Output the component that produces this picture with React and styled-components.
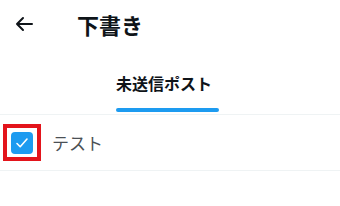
import React from 'react'
import styled, { createGlobalStyle } from 'styled-components'

const GlobalStyle = createGlobalStyle`
  body {
    margin: 0;
    background: #fff;
    font-family: "Noto Sans", "Noto Sans CJK JP", sans-serif;
  }
`

export default function App () {
  return (
    <Page>
      <GlobalStyle />
      <Header>
        <BackButton aria-label='戻る'>
          <svg width='18' height='16' viewBox='0 0 18 16' fill='none'>
            <path d='M17 8H2M8 2L2 8l6 6' stroke='#0f1419' strokeWidth='2' strokeLinecap='round' strokeLinejoin='round' />
          </svg>
        </BackButton>
        <Title>下書き</Title>
      </Header>
      <TabList>
        <Tab>
          <TabLabel>未送信ポスト</TabLabel>
          <TabBar />
        </Tab>
      </TabList>
      <DraftRow>
        <Highlight>
          <CheckBox>
            <svg width='14' height='12' viewBox='0 0 14 12' fill='none'>
              <path d='M2 6.5l3.2 3.2L12 2' stroke='#fff' strokeWidth='1.6' strokeLinecap='round' strokeLinejoin='round' />
            </svg>
          </CheckBox>
        </Highlight>
        <DraftText>テスト</DraftText>
      </DraftRow>
    </Page>
  )
}

const Page = styled.div`
  width: 340px;
  height: 206px;
  background: #fff;
  overflow: hidden;
`

const Header = styled.div`
  display: flex;
  align-items: center;
  height: 48px;
  padding-left: 15px;
`

const BackButton = styled.div`
  display: flex;
  align-items: center;
  width: 18px;
  height: 16px;
  margin-right: 44px;
`

const Title = styled.h1`
  margin: 0;
  font-size: 22px;
  font-weight: 700;
  color: #0f1419;
  line-height: 1;
  margin-top: 1px;
`

const TabList = styled.div`
  display: flex;
  height: 66px;
  padding-left: 116px;
  border-bottom: 1px solid #eff3f4;
`

const Tab = styled.div`
  display: flex;
  flex-direction: column;
  justify-content: flex-end;
  width: 103px;
`

const TabLabel = styled.span`
  font-size: 16px;
  font-weight: 700;
  color: #0f1419;
  line-height: 1;
  margin-bottom: 16px;
  white-space: nowrap;
`

const TabBar = styled.div`
  height: 4px;
  border-radius: 2px;
  background: #1d9bf0;
  margin-bottom: 2px;
`

const DraftRow = styled.div`
  display: flex;
  align-items: center;
  height: 55px;
  padding-left: 3px;
  border-bottom: 1px solid #eff3f4;
`

const Highlight = styled.div`
  display: flex;
  align-items: center;
  justify-content: center;
  width: 38px;
  height: 37px;
  box-sizing: border-box;
  border: 4px solid #e3141b;
  margin-right: 11px;
`

const CheckBox = styled.div`
  display: flex;
  align-items: center;
  justify-content: center;
  width: 22px;
  height: 22px;
  border-radius: 4px;
  background: #1d9bf0;
`

const DraftText = styled.span`
  font-size: 17px;
  color: #4b5055;
  line-height: 1;
  margin-top: 2px;
`
